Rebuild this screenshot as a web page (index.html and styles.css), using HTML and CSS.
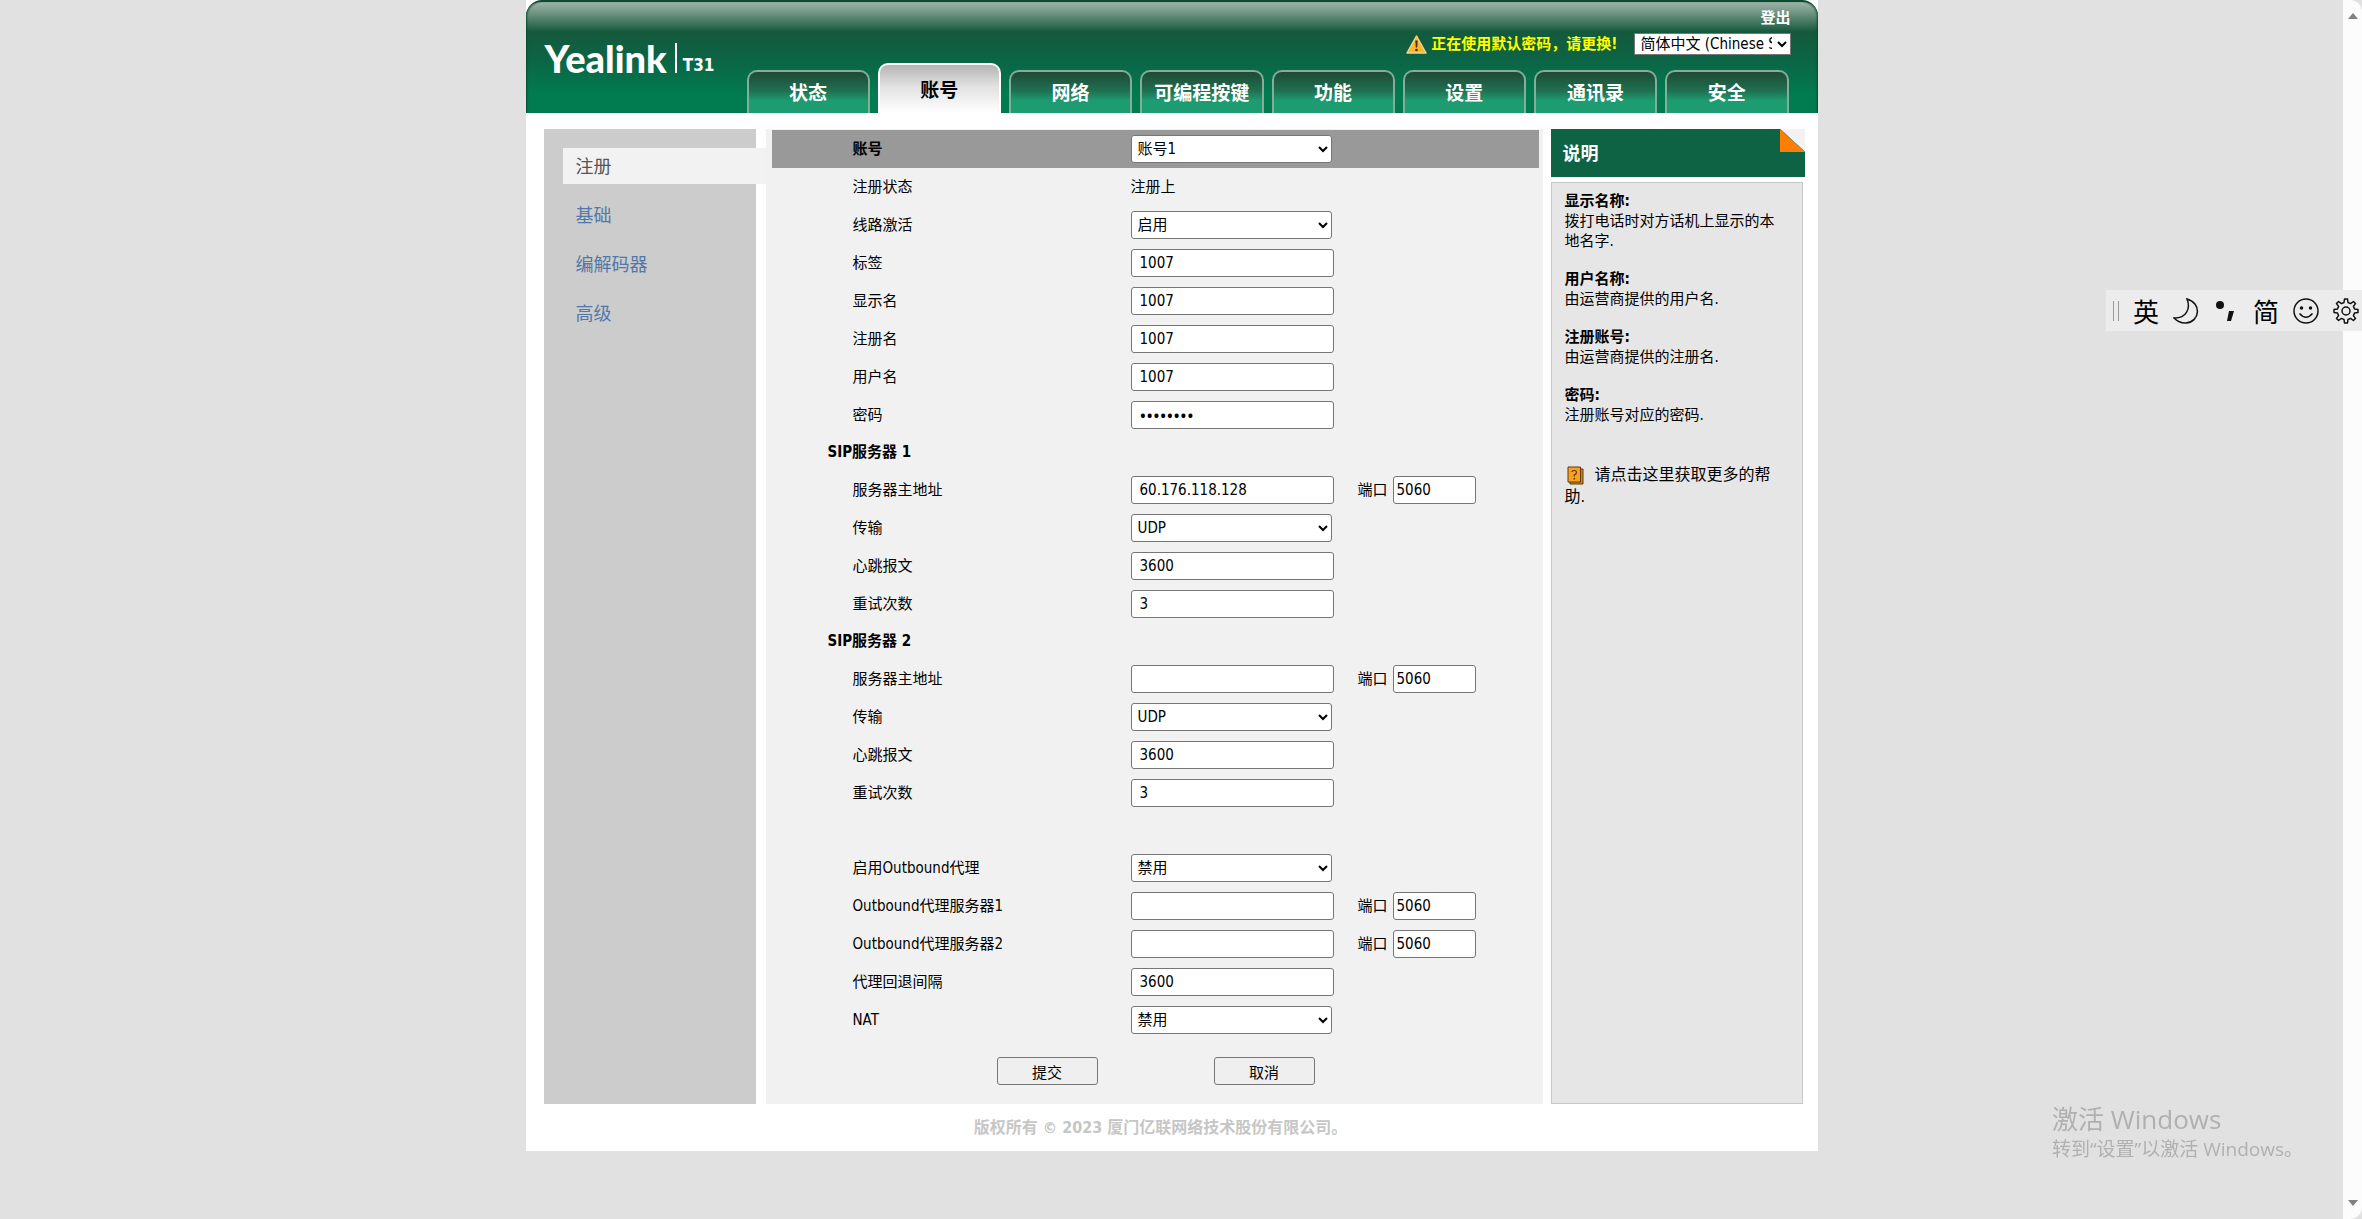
FILE: index.html
```html
<!DOCTYPE html>
<html lang="zh-CN">
<head>
<meta charset="utf-8">
<title>Yealink T31</title>
<link rel="stylesheet" href="styles.css">
</head>
<body>
<div class="viewport">
  <div class="page">
    <header class="header">
      <div class="brand">
        <span class="brand-name">Yealink</span>
        <span class="brand-model">T31</span>
      </div>
      <div class="header-side">
        <a class="logout" href="#">登出</a>
        <div class="notice">
          <svg class="warn-icon" viewBox="0 0 21 19" aria-hidden="true">
            <path d="M10.500 1 L20 18 H1 Z" fill="#fbb829" stroke="#f3d38a" stroke-width="1.500" stroke-linejoin="round"/>
            <path d="M9.300 5.500 H11.700 L11.200 12.500 H9.800 Z" fill="#4a2c12"/>
            <circle cx="10.500" cy="15" r="1.300" fill="#4a2c12"/>
          </svg>
          <a class="notice-text" href="#">正在使用默认密码，请更换!</a>
          <select class="language" aria-label="语言"><option>简体中文 (Chinese Simplified)</option></select>
        </div>
        <nav class="tabs">
          <a class="tab" href="#">状态</a>
          <a class="tab tab-active" href="#">账号</a>
          <a class="tab" href="#">网络</a>
          <a class="tab" href="#">可编程按键</a>
          <a class="tab" href="#">功能</a>
          <a class="tab" href="#">设置</a>
          <a class="tab" href="#">通讯录</a>
          <a class="tab" href="#">安全</a>
        </nav>
      </div>
    </header>

    <div class="columns">
      <nav class="sidebar">
        <a class="side-link side-active" href="#">注册</a>
        <a class="side-link" href="#">基础</a>
        <a class="side-link" href="#">编解码器</a>
        <a class="side-link" href="#">高级</a>
      </nav>

      <form class="panel">
        <div class="row row-account"><label for="account">账号</label><select id="account"><option>账号1</option></select></div>
        <div class="row"><span>注册状态</span><span>注册上</span></div>
        <div class="row"><label for="active">线路激活</label><select id="active"><option>启用</option></select></div>
        <div class="row"><label for="tag">标签</label><input id="tag" type="text" value="1007"></div>
        <div class="row"><label for="display">显示名</label><input id="display" type="text" value="1007"></div>
        <div class="row"><label for="register">注册名</label><input id="register" type="text" value="1007"></div>
        <div class="row"><label for="user">用户名</label><input id="user" type="text" value="1007"></div>
        <div class="row"><label for="password">密码</label><input class="secret" id="password" type="password" value="12345678"></div>

        <h2 class="section">SIP服务器 1</h2>
        <div class="row"><label for="host1">服务器主地址</label><input id="host1" type="text" value="60.176.118.128"><label for="port1">端口</label><input class="port" id="port1" type="text" value="5060"></div>
        <div class="row"><label for="transport1">传输</label><select id="transport1"><option>UDP</option></select></div>
        <div class="row"><label for="beat1">心跳报文</label><input id="beat1" type="text" value="3600"></div>
        <div class="row"><label for="retry1">重试次数</label><input id="retry1" type="text" value="3"></div>

        <h2 class="section">SIP服务器 2</h2>
        <div class="row"><label for="host2">服务器主地址</label><input id="host2" type="text"><label for="port2">端口</label><input class="port" id="port2" type="text" value="5060"></div>
        <div class="row"><label for="transport2">传输</label><select id="transport2"><option>UDP</option></select></div>
        <div class="row"><label for="beat2">心跳报文</label><input id="beat2" type="text" value="3600"></div>
        <div class="row"><label for="retry2">重试次数</label><input id="retry2" type="text" value="3"></div>

        <div class="outbound">
          <div class="row"><label for="outbound">启用Outbound代理</label><select id="outbound"><option>禁用</option></select></div>
          <div class="row"><label for="proxy1">Outbound代理服务器1</label><input id="proxy1" type="text"><label for="pport1">端口</label><input class="port" id="pport1" type="text" value="5060"></div>
          <div class="row"><label for="proxy2">Outbound代理服务器2</label><input id="proxy2" type="text"><label for="pport2">端口</label><input class="port" id="pport2" type="text" value="5060"></div>
          <div class="row"><label for="fallback">代理回退间隔</label><input id="fallback" type="text" value="3600"></div>
          <div class="row"><label for="nat">NAT</label><select id="nat"><option>禁用</option></select></div>
        </div>

        <div class="actions">
          <button type="submit">提交</button>
          <button type="button">取消</button>
        </div>
      </form>

      <aside class="help">
        <h2 class="help-title">说明
          <svg class="fold" viewBox="0 0 25 23" aria-hidden="true">
            <path d="M0 0 H25 V23 Z" fill="#f2f2f2"/>
            <path d="M0 0 L25 23 H0 Z" fill="#ff7e00"/>
            <path d="M0 0 L25 23" stroke="#8a8a7c"/>
          </svg>
        </h2>
        <div class="help-body">
          <dl>
            <dt>显示名称:</dt><dd>拨打电话时对方话机上显示的本地名字.</dd>
            <dt>用户名称:</dt><dd>由运营商提供的用户名.</dd>
            <dt>注册账号:</dt><dd>由运营商提供的注册名.</dd>
            <dt>密码:</dt><dd>注册账号对应的密码.</dd>
          </dl>
          <a class="help-more" href="#"><svg class="book-icon" viewBox="0 0 17 19" aria-hidden="true">
            <path d="M3 3 H16 V18 H3 Z" fill="#d98312" stroke="#5b3a10"/>
            <path d="M1 1 H13.500 V16 H1 Z" fill="#f9a11e" stroke="#5b3a10"/>
            <path d="M5 6 Q5 4.500 7.200 4.500 Q9.500 4.500 9.500 6.500 Q9.500 8 7.300 9 V10.500" fill="none" stroke="#5b3a10" stroke-width="1.200"/>
            <circle cx="7.300" cy="12.700" r="0.900" fill="#5b3a10"/>
          </svg>请点击这里获取更多的帮助.</a>
        </div>
      </aside>
    </div>

    <footer class="footer">版权所有 © 2023 厦门亿联网络技术股份有限公司。</footer>
  </div>
</div>

<div class="scrollbar" aria-hidden="true">
  <svg viewBox="0 0 10 6"><path d="M5 0 L10 6 H0 Z"/></svg>
  <svg viewBox="0 0 10 6"><path d="M0 0 H10 L5 6 Z"/></svg>
</div>

<div class="ime">
  <span class="ime-grip"></span>
  <span>英</span>
  <svg viewBox="0 0 26 26" aria-hidden="true"><path d="M14 1 C29 5 27 24 13 25 C8 25.300 4 23 1 20 C13 20.500 18 11 14 1 Z"/></svg>
  <svg viewBox="0 0 26 26" aria-hidden="true"><circle class="ink" stroke="none" cx="7" cy="7" r="4"/><path class="ink" stroke="none" d="M16 13 H21 L18 23 H14 Z"/></svg>
  <span>简</span>
  <svg viewBox="0 0 26 26" aria-hidden="true"><circle cx="13" cy="13" r="12"/><circle class="ink" cx="8.500" cy="10" r="1"/><circle class="ink" cx="17.500" cy="10" r="1"/><path d="M6.500 15.500 Q13 23 19.500 15.500"/></svg>
  <svg viewBox="0 0 26 26" aria-hidden="true"><circle cx="13" cy="13" r="4"/><path d="M11 4.500 L11.500 1 H14.500 L15 4.500 L17.600 5.600 L20.400 3.500 L22.500 5.600 L20.400 8.400 L21.500 11 L25 11.500 V14.500 L21.500 15 L20.400 17.600 L22.500 20.400 L20.400 22.500 L17.600 20.400 L15 21.500 L14.500 25 H11.500 L11 21.500 L8.400 20.400 L5.600 22.500 L3.500 20.400 L5.600 17.600 L4.500 15 L1 14.500 V11.500 L4.500 11 L5.600 8.400 L3.500 5.600 L5.600 3.500 L8.400 5.600 Z" stroke-linejoin="round"/></svg>
</div>

<div class="watermark">
  <p class="watermark-title">激活 Windows</p>
  <p>转到“设置”以激活 Windows。</p>
</div>
</body>
</html>
```
FILE: styles.css
```css
* {
  box-sizing: border-box;
}

body {
  display: flex;
  min-height: 100vh;
  margin: 0;
  background: #e1e1e1;
  color: #000;
  font-family: "DejaVu Sans Condensed", "Noto Sans CJK SC", sans-serif;
  font-size: 15px;
  line-height: 20px;
}

a {
  color: inherit;
  text-decoration: none;
}

.viewport {
  flex: 1;
}

.page {
  max-width: 1292px;
  margin: 0 auto;
  background: #fff;
}

/* Header */

.header {
  display: grid;
  grid-template-columns: 221px 1fr;
  border-top: 2px solid #0d4b30;
  border-radius: 16px 16px 0 0;
  background: linear-gradient(#9db5a9 0, #7d9d8d 8px, #14593c 30px, #0b6646 60px, #007c50 94px);
  box-shadow: inset 2px 0 2px -1px #0d4b30, inset -2px 0 2px -1px #0d4b30;
}

.brand {
  display: flex;
  align-items: flex-end;
  align-self: start;
  gap: 8px;
  padding: 41px 0 0 19px;
  color: #fff;
}

.brand-name {
  font: 900 38px/30px Lato, sans-serif;
}

.brand-model {
  padding: 14px 0 0 6px;
  border-left: 2px solid #fff;
  font-family: "DejaVu Sans Condensed", sans-serif;
  font-size: 17px;
  line-height: 16px;
  font-weight: 700;
}

.header-side {
  display: flex;
  flex-direction: column;
  padding-right: 29px;
}

.logout {
  align-self: flex-end;
  margin: 6px -2px 5px 0;
  color: #fff;
  font-weight: 700;
}

.notice {
  display: flex;
  align-items: center;
  justify-content: flex-end;
  height: 22px;
  margin-right: -2px;
  margin-bottom: 8px;
}

.warn-icon {
  width: 21px;
  height: 19px;
  margin-right: 4px;
}

.notice-text {
  margin-right: 16px;
  color: #ff0;
  font-weight: 700;
}

.language {
  width: 157px;
  height: 22px;
  border-radius: 0;
}

.tabs {
  display: grid;
  grid-template-columns: repeat(8, 1fr);
  gap: 8px;
  align-items: end;
}

.tab {
  height: 43px;
  padding-top: 7px;
  border: 2px solid #86ac9c;
  border-bottom: 0;
  border-radius: 10px 10px 0 0;
  background: linear-gradient(#1f4a35, #1f6f50 45%, #1d9c71 70%);
  color: #fff;
  font-size: 19px;
  line-height: 28px;
  font-weight: 700;
  text-align: center;
}

.tab-active {
  height: 50px;
  padding-top: 11px;
  border-color: #fff;
  background: linear-gradient(#b4b4b4, #e2e2e2 45%, #fff);
  color: #000;
}

/* Three columns */

.columns {
  display: flex;
  padding: 16px 13px 0 18px;
}

.sidebar {
  display: flex;
  flex-direction: column;
  gap: 13px;
  width: 212px;
  margin-right: 10px;
  padding: 19px 0 0 19px;
  background: #ccc;
}

.side-link {
  padding: 5px 13px 3px;
  color: #5078a8;
  font-size: 18px;
  line-height: 28px;
}

.side-active {
  margin-right: -10px;
  background: #f2f2f2;
  color: #555;
}

.panel {
  flex: 1;
  margin-right: 8px;
  padding: 1px 4px 19px 6px;
  background: #f1f1f1;
}

.row {
  display: grid;
  grid-template-columns: 278px 227px 35px 1fr;
  align-items: center;
  height: 38px;
  padding-left: 81px;
}

.row-account {
  background: #999;
  font-weight: 700;
}

.section {
  margin: 0;
  padding-left: 56px;
  font-size: 15px;
  line-height: 37px;
}

.outbound {
  margin-top: 37px;
}

input,
select,
button {
  height: 28px;
  border: 1px solid #767676;
  border-radius: 3px;
  background: #fff;
  color: #000;
  font-family: inherit;
  font-size: 15px;
}

input {
  width: 203px;
  padding: 0 8px;
}

select {
  width: 201px;
  padding: 0 2px;
}

.port {
  width: 83px;
  padding: 0 3px;
}

.secret {
  font-family: "Noto Sans", sans-serif;
  font-size: 18px;
}

.actions {
  display: flex;
  gap: 116px;
  margin-top: 18px;
  padding-left: 225px;
}

button {
  width: 101px;
  background: #efefef;
}

/* Help column */

.help {
  display: flex;
  flex-direction: column;
  gap: 5px;
  width: 254px;
}

.help-title {
  display: flex;
  justify-content: space-between;
  height: 48px;
  margin: 0;
  padding-left: 12px;
  background: #0e6344;
  color: #fff;
  font-size: 18px;
  line-height: 50px;
}

.fold {
  width: 25px;
  height: 23px;
}

.help-body {
  flex: 1;
  margin-right: 2px;
  padding: 8px 24px 0 13px;
  border: 1px solid #c8c8c8;
  background: #e6e6e6;
}

.help-body dl {
  margin: 0 0 39px;
}

.help-body dt {
  font-weight: 700;
}

.help-body dd {
  margin: 0 0 18px;
}

.help-more {
  display: block;
  font-size: 16px;
  line-height: 22px;
}

.book-icon {
  width: 17px;
  height: 19px;
  margin: 0 11px 0 2px;
  vertical-align: middle;
}

.footer {
  padding: 13px 22px 12px 0;
  color: #c6c6c6;
  font-size: 16px;
  line-height: 22px;
  font-weight: 700;
  text-align: center;
}

/* Window furniture */

.scrollbar {
  display: flex;
  flex-direction: column;
  align-items: center;
  justify-content: space-between;
  width: 19px;
  padding: 13px 0;
  border-radius: 0 12px 12px 0;
  background: #fcfcfc;
}

.scrollbar svg {
  width: 10px;
  height: 6px;
  fill: #808080;
}

.ime {
  position: fixed;
  top: 290px;
  right: 0;
  display: flex;
  align-items: center;
  gap: 14px;
  height: 41px;
  padding: 0 3px 0 7px;
  background: #ececec;
  font-family: "Noto Sans CJK SC", sans-serif;
  font-size: 26px;
  line-height: 26px;
}

.ime svg {
  width: 26px;
  height: 26px;
  fill: none;
  stroke: #111;
  stroke-width: 1.5;
}

.ime .ink {
  fill: #111;
}

.ime-grip {
  width: 6px;
  height: 20px;
  border: solid #999;
  border-width: 0 1px;
}

.watermark {
  position: fixed;
  left: calc(100% - 310px);
  bottom: 57px;
  color: #b0b0b0;
  font-family: "Open Sans", "Noto Sans CJK SC", sans-serif;
  font-size: 19px;
  line-height: 26px;
  white-space: nowrap;
}

.watermark p {
  margin: 0;
}

.watermark .watermark-title {
  font-size: 26px;
  line-height: 34px;
}
```
